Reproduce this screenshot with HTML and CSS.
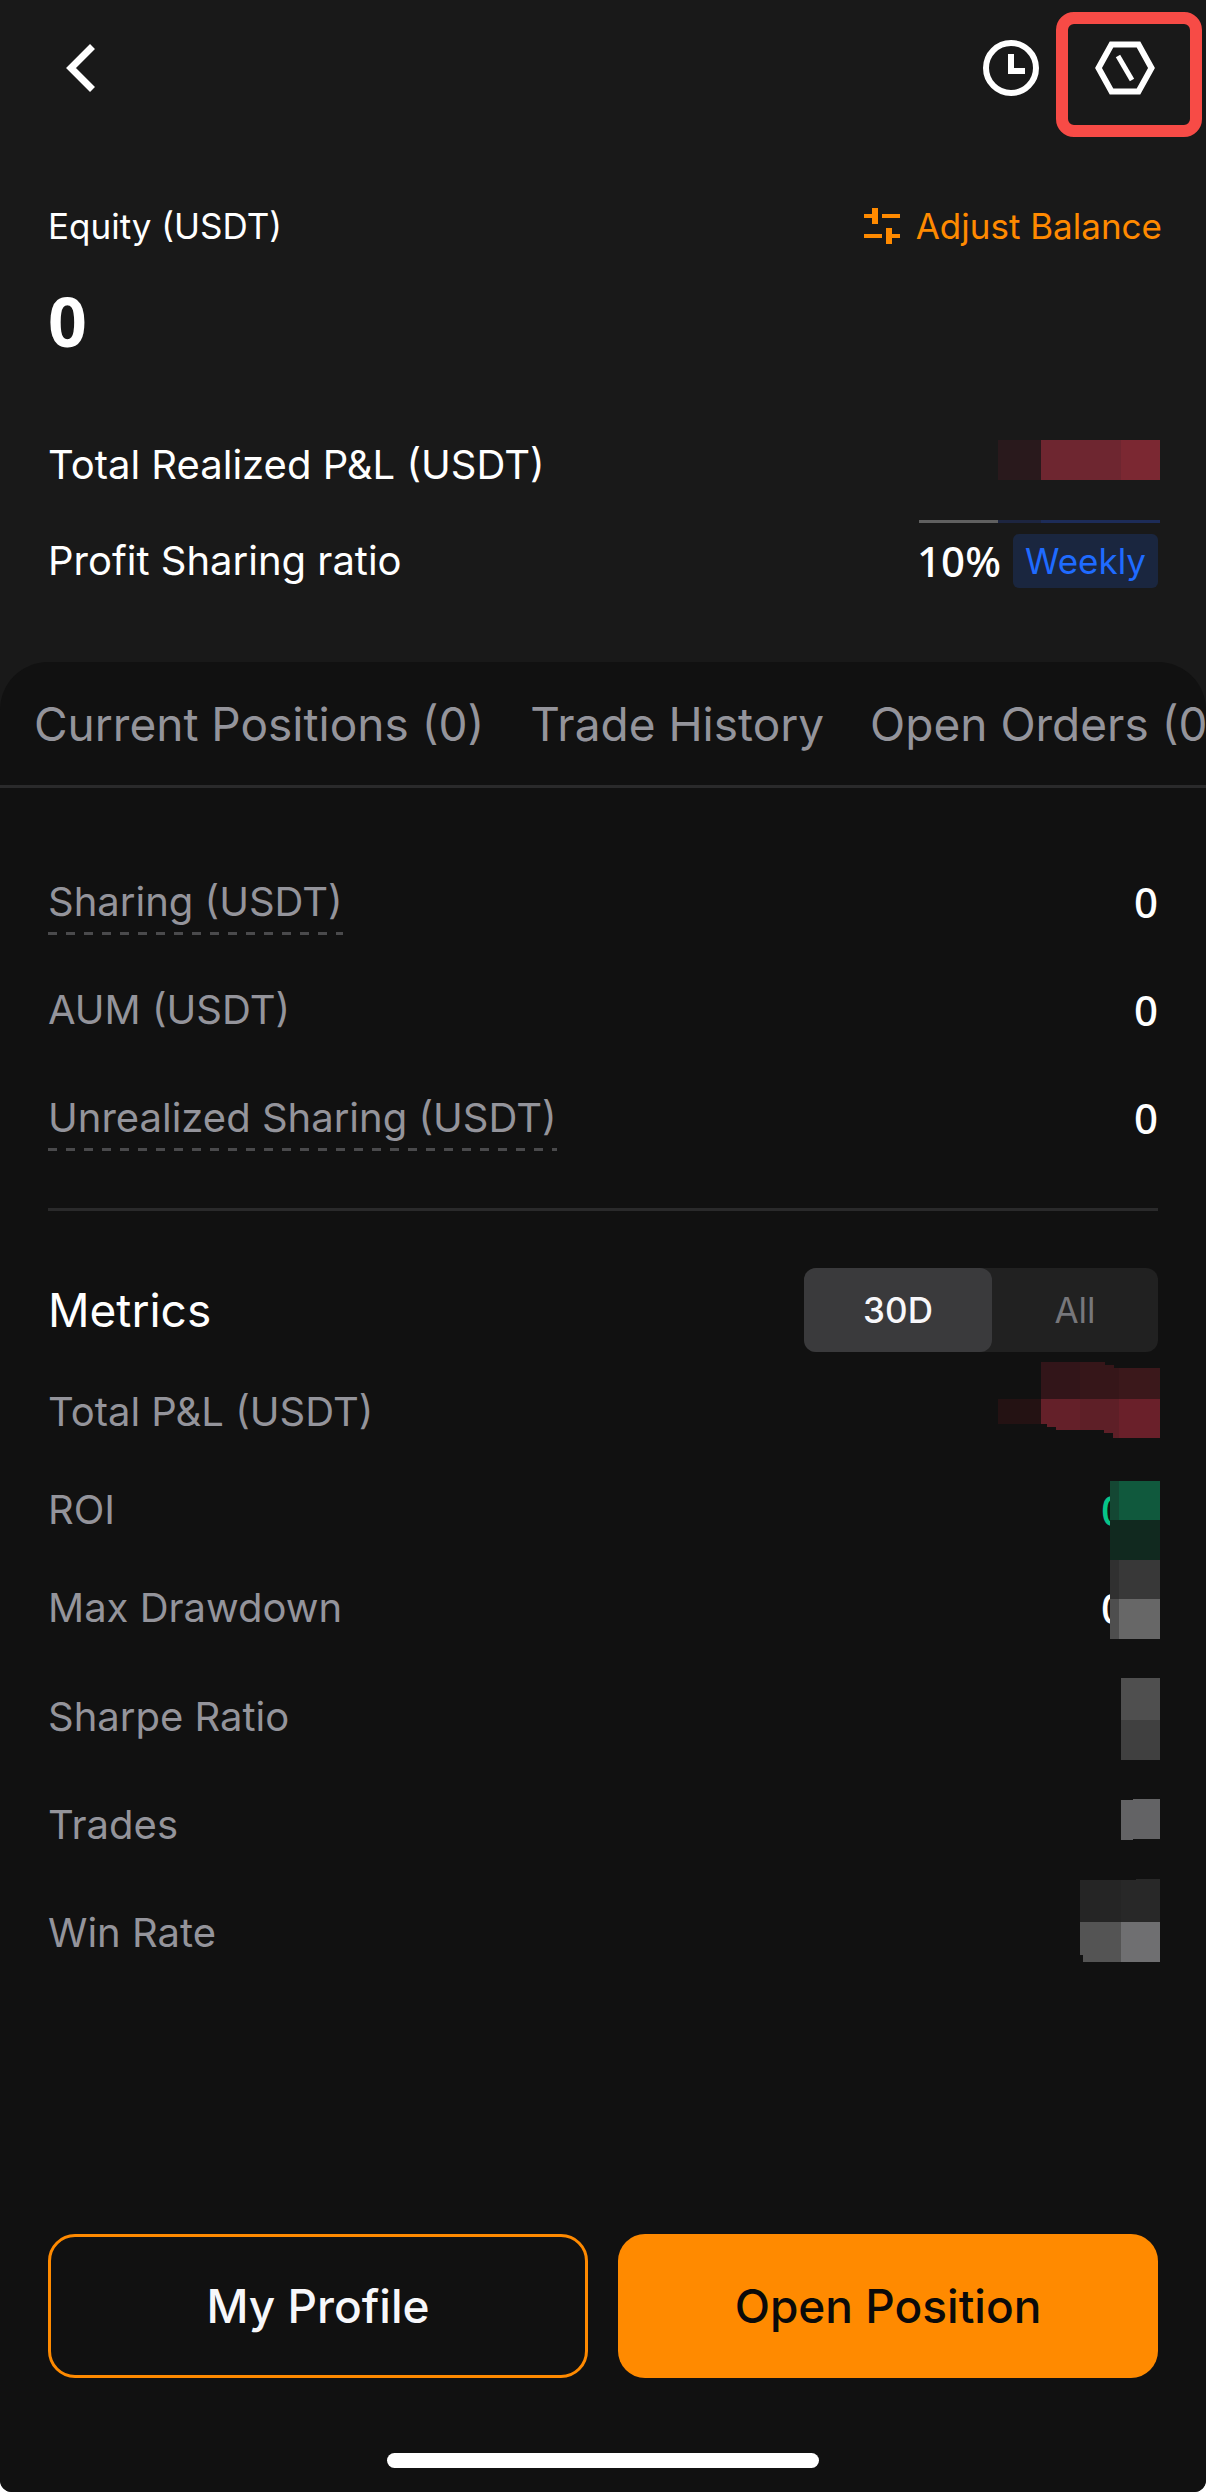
FILE: index.html
```
<!DOCTYPE html>
<html lang="en">
<head>
<meta charset="utf-8">
<meta name="viewport" content="width=device-width, initial-scale=1">
<title>Lead Trader Overview</title>
<link rel="stylesheet" href="styles.css">
</head>
<body>
<div class="app">
  <header class="topbar">
    <button class="icon-button" type="button" aria-label="Back">
      <svg width="36" height="54" viewBox="0 0 36 54" fill="none" stroke="#fff" stroke-width="7"><path d="M29.500 5.500 8 27l21.500 21.500"/></svg>
    </button>
    <div class="topbar-actions">
      <button class="icon-button" type="button" aria-label="History">
        <svg width="60" height="60" viewBox="0 0 60 60" fill="none" stroke="#fff" stroke-width="6"><circle cx="30" cy="30" r="25"/><path d="M30 16v17h14" /></svg>
      </button>
      <button class="icon-button highlighted" type="button" aria-label="Settings">
        <svg width="60" height="60" viewBox="0 0 60 60" fill="none" stroke="#fff" stroke-width="6"><path d="M16.500 6.500h27L56.500 30l-13 23.500h-27L3.500 30z"/><path d="m23 18 14 24" stroke-width="5"/></svg>
      </button>
    </div>
  </header>

  <section class="account">
    <div class="account-head">
      <span>Equity (USDT)</span>
      <button class="adjust" type="button">
        <svg width="36" height="36" viewBox="0 0 36 36" fill="#ff8a00"><path d="M0 6h8V0h6v16H8v-6H0zM18 6h18v4H18zM0 26h18v4H0zM22 20h6v6h8v4h-8v6h-6z"/></svg>
        Adjust Balance
      </button>
    </div>
    <div class="equity num">0</div>
    <dl class="list summary">
      <div class="row">
        <dt>Total Realized P&amp;L (USDT)</dt>
        <dd><svg class="mosaic mosaic-realized" width="162" height="40" viewBox="0 0 162 40"><path fill="#29191c" d="M0 0h43v40H0z"/><path fill="#6e2630" d="M43 0h80v40H43z"/><path fill="#7b2832" d="M123 0h39v40h-39z"/></svg></dd>
      </div>
      <div class="row">
        <dt>Profit Sharing ratio</dt>
        <dd class="ratio"><span class="num">10%</span><span class="badge">Weekly</span><svg class="mosaic mosaic-line" width="241" height="3" viewBox="0 0 241 3"><path fill="#606060" d="M0 0h79v3H0z"/><path fill="#1d2540" d="M79 0h43v3H79z"/><path fill="#1d2c58" d="M122 0h119v3H122z"/></svg></dd>
      </div>
    </dl>
  </section>

  <main class="panel">
    <nav class="tabs">
      <button type="button">Current Positions (0)</button>
      <button type="button">Trade History</button>
      <button type="button">Open Orders (0)</button>
    </nav>

    <dl class="list sharing">
      <div class="row"><dt><span class="hint">Sharing (USDT)</span></dt><dd class="num">0</dd></div>
      <div class="row"><dt>AUM (USDT)</dt><dd class="num">0</dd></div>
      <div class="row"><dt><span class="hint">Unrealized Sharing (USDT)</span></dt><dd class="num">0</dd></div>
    </dl>

    <section class="metrics">
      <div class="metrics-head">
        <h2>Metrics</h2>
        <div class="segment">
          <button class="active" type="button">30D</button>
          <button type="button">All</button>
        </div>
      </div>
      <dl class="list compact">
        <div class="row">
          <dt>Total P&amp;L (USDT)</dt>
          <dd><svg class="mosaic mosaic-pnl" width="162" height="76" viewBox="0 0 162 76"><path fill="#241213" d="M0 37h43v25H0z"/><path fill="#321519" d="M43 0h39v37H43z"/><path fill="#361619" d="M82 0h25v3h9v3h6v31H82z"/><path fill="#3b181b" d="M121 6h41v31h-41z"/><path fill="#642029" d="M43 37h39v31H58v-3h-9v-3h-6z"/><path fill="#5e1f27" d="M82 37h39v39h-6v-5h-9v-3H82z"/><path fill="#6a202a" d="M121 37h41v39h-41z"/></svg></dd>
        </div>
        <div class="row">
          <dt>ROI</dt>
          <dd class="num covered gain">0<svg class="mosaic mosaic-roi" width="50" height="79" viewBox="0 0 50 79"><path fill="#144733" d="M0 0h9v39H0z"/><path fill="#10593d" d="M9 0h41v39H9z"/><path fill="#11291f" d="M0 39h50v40H0z"/></svg></dd>
        </div>
        <div class="row">
          <dt>Max Drawdown</dt>
          <dd class="num covered">0<svg class="mosaic mosaic-drawdown" width="50" height="79" viewBox="0 0 50 79"><path fill="#303030" d="M0 0h9v39H0z"/><path fill="#383838" d="M9 0h41v39H9z"/><path fill="#4e4e4e" d="M0 39h9v40H0z"/><path fill="#676767" d="M9 39h41v40H9z"/></svg></dd>
        </div>
      </dl>
      <dl class="list ratios">
        <div class="row">
          <dt>Sharpe Ratio</dt>
          <dd><svg class="mosaic mosaic-sharpe" width="39" height="82" viewBox="0 0 39 82"><path fill="#4f4f4f" d="M0 0h39v42H0z"/><path fill="#404040" d="M0 42h39v40H0z"/></svg></dd>
        </div>
        <div class="row">
          <dt>Trades</dt>
          <dd><svg class="mosaic mosaic-trades" width="39" height="41" viewBox="0 0 39 41"><path fill="#636365" d="M0 1h12V0h27v40H12v1H0z"/></svg></dd>
        </div>
        <div class="row">
          <dt>Win Rate</dt>
          <dd><svg class="mosaic mosaic-win" width="80" height="83" viewBox="0 0 80 83"><path fill="#252525" d="M0 1h41v42H0z"/><path fill="#282828" d="M41 1h15V0h24v43H41z"/><path fill="#545454" d="M0 43h41v40H3v-7H0z"/><path fill="#6f6f71" d="M41 43h39v40H41z"/></svg></dd>
        </div>
      </dl>
    </section>

    <footer class="actions">
      <button class="button outline" type="button">My Profile</button>
      <button class="button primary" type="button">Open Position</button>
    </footer>
    <div class="home-indicator"></div>
  </main>
</div>
</body>
</html>
```
FILE: styles.css
```
* {
  box-sizing: border-box;
}

body {
  margin: 0;
  background: #fff;
  color: #fff;
  font-family: Inter, "Noto Sans", sans-serif;
  font-size: 40px;
  line-height: 66px;
}

button {
  margin: 0;
  padding: 0;
  border: 0;
  background: none;
  color: inherit;
  font: inherit;
  white-space: nowrap;
  cursor: pointer;
}

svg {
  display: block;
  flex: none;
}

.app {
  display: flex;
  flex-direction: column;
  min-height: 100vh;
  overflow: hidden;
  border-radius: 0 0 12px 12px;
  background: #191919;
}

.num {
  font-family: "Noto Sans", sans-serif;
  font-size: 42px;
  font-weight: 500;
}

/* Top bar */

.topbar {
  display: flex;
  align-items: center;
  justify-content: space-between;
  height: 136px;
  padding: 0 51px 0 63px;
}

.topbar-actions {
  display: flex;
  gap: 54px;
}

.icon-button {
  position: relative;
}

.highlighted::after {
  content: "";
  position: absolute;
  inset: -26px -47px -39px -39px;
  border: 12px solid #f74b46;
  border-radius: 18px;
}

/* Account summary */

.account {
  padding: 66px 48px 53px;
}

.account-head {
  display: flex;
  align-items: center;
  justify-content: space-between;
  margin-right: -4px;
  font-size: 35px;
  line-height: 48px;
}

.adjust {
  display: flex;
  align-items: center;
  gap: 16px;
  color: #ff8a00;
}

.equity {
  margin-top: 32px;
  font-size: 68px;
  font-weight: 700;
  line-height: 78px;
}

/* Label and value lists */

.list {
  margin: 0;
}

.row {
  position: relative;
  display: flex;
  align-items: center;
  justify-content: space-between;
  height: 108px;
}

.row dd {
  margin: 0;
}

.panel dt {
  color: #94949b;
}

.hint {
  display: block;
  background: repeating-linear-gradient(90deg, #4a4a4c 0 9px, transparent 9px 18px) left bottom / 100% 3px no-repeat;
}

.summary {
  margin-top: 57px;
}

.summary .row {
  height: 96px;
}

.ratio {
  display: flex;
  align-items: center;
  gap: 12px;
}

.badge {
  padding: 0 12px;
  border-radius: 6px;
  background: #1a263f;
  color: #1f6bff;
  font-size: 35px;
  line-height: 54px;
}

/* Pixelated blocks laid over private values */

.mosaic {
  position: absolute;
  right: -2px;
}

.mosaic-realized {
  top: 23px;
}

.mosaic-line {
  top: 7px;
}

.mosaic-pnl {
  top: -1px;
}

.mosaic-roi {
  top: 20px;
}

.mosaic-drawdown {
  top: 1px;
}

.mosaic-sharpe {
  top: 15px;
}

.mosaic-trades {
  top: 28px;
}

.mosaic-win {
  top: 0;
}

.row .covered {
  padding-right: 33px;
}

.gain {
  color: #06c488;
}

/* Panel */

.panel {
  display: flex;
  flex: 1;
  flex-direction: column;
  border-radius: 48px 48px 0 0;
  background: #111;
}

.tabs {
  display: flex;
  gap: 46px;
  height: 126px;
  padding-left: 34px;
  overflow-x: auto;
  overflow-y: hidden;
  scrollbar-width: none;
  border-bottom: 3px solid #2a2a2b;
  color: #94949b;
  font-size: 46px;
}

.sharing {
  margin: 60px 48px 0;
  padding-bottom: 36px;
  border-bottom: 3px solid #2a2a2b;
}

.metrics {
  margin: 57px 48px 48px;
}

.metrics-head {
  display: flex;
  align-items: center;
  justify-content: space-between;
  margin-bottom: 11px;
}

.metrics-head h2 {
  margin: 0;
  font-size: 46px;
  font-weight: 400;
}

.segment {
  display: grid;
  grid-template-columns: 188px 166px;
  border-radius: 12px;
  background: #212121;
  color: #77777b;
  font-size: 35px;
  line-height: 84px;
}

.segment .active {
  border-radius: 12px;
  background: #3a3a3c;
  color: #f7f7fa;
  font-weight: 500;
}

.compact .row {
  height: 98px;
}

.ratios {
  margin-top: 6px;
}

/* Bottom actions */

.actions {
  display: grid;
  grid-template-columns: 1fr 1fr;
  gap: 30px;
  margin-top: auto;
  padding: 0 48px;
}

.button {
  height: 144px;
  border-radius: 27px;
  font-size: 46px;
  font-weight: 500;
}

.outline {
  border: 3px solid #ff8a00;
  color: #f7f7fa;
}

.primary {
  background: #ff8a00;
  color: #0a0a0a;
}

.home-indicator {
  width: 432px;
  max-width: 60%;
  height: 15px;
  margin: 75px auto 24px;
  border-radius: 8px;
  background: #fff;
}
```
